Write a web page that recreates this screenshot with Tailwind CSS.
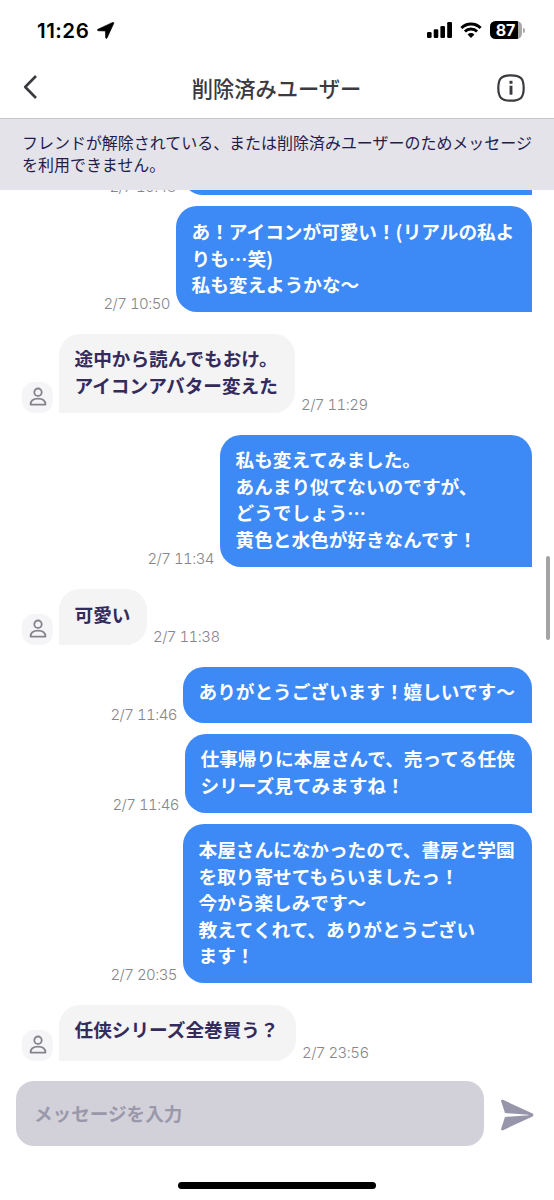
<!DOCTYPE html>
<html lang="ja">
<head>
<meta charset="utf-8">
<title>削除済みユーザー</title>
<script src="https://cdn.jsdelivr.net/npm/@tailwindcss/browser@4"></script>
</head>
<body class="bg-white">
<svg class="hidden">
  <symbol id="person" viewBox="0 0 18 20"><g fill="none" stroke="#84848c" stroke-width="1.8"><circle cx="9" cy="5.2" r="3.7"/><path d="M1.600 17.6C1.600 13.6 4.6 11.7 9 11.7s7.400 1.900 7.400 5.900Z" stroke-linejoin="round"/></g></symbol>
</svg>
<div class="relative flex h-[1200px] w-[554px] flex-col overflow-hidden bg-white font-['Liberation_Sans','Noto_Sans_CJK_JP',sans-serif]">
  <!-- Status bar -->
  <div class="flex h-[60px] shrink-0 items-center justify-between pl-[37px] pr-[29px] text-black">
    <div class="flex items-center gap-[6px]">
      <span class="w-[54px] pt-[1px] font-['Inter',sans-serif] text-[20.500px] leading-6 font-semibold tracking-[0.500px]">11:26</span>
      <svg class="h-[17px] w-[18px]" viewBox="0 0 18 17"><path d="M.9 7.300 15.600.4q1.700-.4 1.100 1.200L10.100 15.900q-1.100 1.400-1.500-.3L8.400 9 1.100 8.800Q-.5 8.200.9 7.300Z" stroke="#000" stroke-width=".6"/></svg>
    </div>
    <div class="flex items-center">
      <svg class="h-[16px] w-[26px]" viewBox="0 0 26 16"><rect x="0" y="10" width="4.600" height="6" rx="1.300"/><rect x="6.700" y="7.200" width="4.600" height="8.800" rx="1.300"/><rect x="13.400" y="4" width="4.600" height="12" rx="1.300"/><rect x="20.200" y="0" width="4.800" height="16" rx="1.300"/></svg>
      <svg class="ml-[7px] h-[16px] w-[22px]" viewBox="0 0 22 16"><g fill="none" stroke="#000" stroke-width="2.900"><path d="M1.400 6a13.500 13.500 0 0 1 19.200 0"/><path d="M4.900 9.600a8.600 8.600 0 0 1 12.200 0"/></g><path d="M11 15.900 7.600 12.500a4.800 4.800 0 0 1 6.800 0Z"/></svg>
      <div class="ml-[8px] flex h-[18px] w-[32px] items-center justify-center rounded-[5.500px] bg-[linear-gradient(90deg,#000_89%,#a8a8a8_89%)] pr-[1px] font-['Inter',sans-serif] text-[16px] leading-none font-bold text-white">87</div>
      <div class="ml-[1px] h-[5px] w-[2px] rounded-r-full bg-[#a8a8a8]"></div>
    </div>
  </div>
  <!-- Header -->
  <header class="flex h-[58px] shrink-0 items-center justify-between pr-[29px] pl-[22px] text-[#3a3a3f]">
    <svg class="mb-[5px] h-[26px] w-[28px]" viewBox="0 0 28 26" fill="none" stroke="currentColor" stroke-width="2.600"><path d="M14 2 3.200 13 14 24" stroke-linejoin="round"/></svg>
    <h1 class="mb-[2px] ml-[6px] font-['Noto_Sans_CJK_JP',sans-serif] text-[21.250px] leading-7 font-medium">削除済みユーザー</h1>
    <svg class="mb-[3px] h-[28px] w-[28px]" viewBox="0 0 28 28" fill="none" stroke="currentColor"><path d="M14 1.300c9.500 0 12.700 3.200 12.700 12.700S23.500 26.700 14 26.700 1.300 23.500 1.300 14 4.500 1.300 14 1.300Z" stroke-width="2.200"/><path d="M14 11.700v9" stroke-width="2.900"/><path d="M14 6.800v3" stroke-width="3"/></svg>
  </header>
  <!-- Notice -->
  <div class="h-[72px] shrink-0 border-t border-[#c8c8ca] bg-[#e4e3e9] pt-[12px] pl-[22px] font-['Noto_Sans_CJK_JP',sans-serif] text-[15.980px] leading-[22px] whitespace-nowrap text-[#231c4b]">フレンドが解除されている、または削除済みユーザーのためメッセージ<br>を利用できません。</div>
  <!-- Messages -->
  <main class="flex h-[871px] shrink-0 flex-col justify-end overflow-hidden pr-[22px] pl-[22px] font-['Noto_Sans_CJK_JP',sans-serif] text-[18.650px] leading-[26.500px] font-bold whitespace-nowrap">
    <div class="flex shrink-0 items-end justify-end gap-[6px]">
      <time class="font-['Inter',sans-serif] text-[15px] leading-4 font-light tracking-[-0.550px] tabular-nums text-[#86868b]">2/7 10:48</time>
      <div class="h-[56px] w-[350px] rounded-[21px] rounded-br-none bg-[#3d89f6]"></div>
    </div>
    <div class="mt-[11px] flex shrink-0 items-end justify-end gap-[6px]">
      <time class="font-['Inter',sans-serif] text-[15px] leading-4 font-light tracking-[-0.550px] tabular-nums text-[#86868b]">2/7 10:50</time>
      <div class="h-[106px] w-[356px] rounded-[21px] rounded-br-none bg-[#3d89f6] pt-[12px] pl-[15.500px] text-white">あ！アイコンが可愛い！(リアルの私よ<br>りも…笑)<br>私も変えようかな〜</div>
    </div>
    <div class="mt-[22px] flex shrink-0 items-end gap-[6px]">
      <div class="flex size-[31px] items-center justify-center rounded-[12px] bg-[#f5f5f8]"><svg class="mb-[2px] h-[20px] w-[18px]"><use href="#person"/></svg></div>
      <div class="h-[79px] w-[236px] rounded-[21px] rounded-bl-none bg-[#f4f4f5] pt-[11px] pl-[15.500px] text-[#332b5c]">途中から読んでもおけ。<br>アイコンアバター変えた</div>
      <time class="font-['Inter',sans-serif] text-[15px] leading-4 font-light tracking-[-0.550px] tabular-nums text-[#86868b]">2/7 11:29</time>
    </div>
    <div class="mt-[22px] flex shrink-0 items-end justify-end gap-[6px]">
      <time class="font-['Inter',sans-serif] text-[15px] leading-4 font-light tracking-[-0.550px] tabular-nums text-[#86868b]">2/7 11:34</time>
      <div class="h-[132px] w-[312px] rounded-[21px] rounded-br-none bg-[#3d89f6] pt-[11px] pl-[15.500px] text-white">私も変えてみました。<br>あんまり似てないのですが、<br>どうでしょう…<br>黄色と水色が好きなんです！</div>
    </div>
    <div class="mt-[22px] flex shrink-0 items-end gap-[6px]">
      <div class="flex size-[31px] items-center justify-center rounded-[12px] bg-[#f5f5f8]"><svg class="mb-[2px] h-[20px] w-[18px]"><use href="#person"/></svg></div>
      <div class="h-[56px] w-[88px] rounded-[21px] rounded-bl-none bg-[#f4f4f5] pt-[12px] pl-[15.500px] text-[#332b5c]">可愛い</div>
      <time class="font-['Inter',sans-serif] text-[15px] leading-4 font-light tracking-[-0.550px] tabular-nums text-[#86868b]">2/7 11:38</time>
    </div>
    <div class="mt-[22px] flex shrink-0 items-end justify-end gap-[6px]">
      <time class="font-['Inter',sans-serif] text-[15px] leading-4 font-light tracking-[-0.550px] tabular-nums text-[#86868b]">2/7 11:46</time>
      <div class="h-[56px] w-[349px] rounded-[21px] rounded-br-none bg-[#3d89f6] pt-[11px] pl-[15.500px] text-white">ありがとうございます！嬉しいです〜</div>
    </div>
    <div class="mt-[11px] flex shrink-0 items-end justify-end gap-[6px]">
      <time class="font-['Inter',sans-serif] text-[15px] leading-4 font-light tracking-[-0.550px] tabular-nums text-[#86868b]">2/7 11:46</time>
      <div class="h-[79px] w-[347px] rounded-[21px] rounded-br-none bg-[#3d89f6] pt-[11px] pl-[15.500px] text-white">仕事帰りに本屋さんで、売ってる任侠<br>シリーズ見てみますね！</div>
    </div>
    <div class="mt-[11px] flex shrink-0 items-end justify-end gap-[6px]">
      <time class="font-['Inter',sans-serif] text-[15px] leading-4 font-light tracking-[-0.550px] tabular-nums text-[#86868b]">2/7 20:35</time>
      <div class="h-[159px] w-[349px] rounded-[21px] rounded-br-none bg-[#3d89f6] pt-[12px] pl-[15.500px] text-white">本屋さんになかったので、書房と学園<br>を取り寄せてもらいましたっ！<br>今から楽しみです〜<br>教えてくれて、ありがとうござい<br>ます！</div>
    </div>
    <div class="mt-[22px] flex shrink-0 items-end gap-[6px]">
      <div class="flex size-[31px] items-center justify-center rounded-[12px] bg-[#f5f5f8]"><svg class="mb-[2px] h-[20px] w-[18px]"><use href="#person"/></svg></div>
      <div class="h-[56px] w-[237px] rounded-[21px] rounded-bl-none bg-[#f4f4f5] pt-[11px] pl-[15.500px] text-[#332b5c]">任侠シリーズ全巻買う？</div>
      <time class="font-['Inter',sans-serif] text-[15px] leading-4 font-light tracking-[-0.550px] tabular-nums text-[#86868b]">2/7 23:56</time>
    </div>
  </main>
  <!-- Composer -->
  <footer class="flex shrink-0 items-center gap-[16px] pt-[20px] pl-[16px]">
    <div class="flex h-[65px] w-[468px] items-center rounded-[18px] bg-[#d2d1d9] pb-[2px] pl-[18px] font-['Noto_Sans_CJK_JP',sans-serif] text-[18.600px] font-bold text-[#9a98aa]">メッセージを入力</div>
    <svg class="mt-[3px] h-[32px] w-[34px]" viewBox="0 0 34 32" fill="#9795aa"><path d="M3 .8 32.600 14.600q1.700 1.400 0 2.800L3 31.200Q.6 31.800 1.200 29.500L5 17.900 28.500 16.300V15.700L5 14.100 1.200 2.500Q.6.200 3 .8Z"/></svg>
  </footer>
  <div class="mt-auto mb-[11px] h-[7px] w-[198px] shrink-0 self-center rounded-full bg-black"></div>
  <!-- Scroll indicator overlay -->
  <div class="absolute top-[556px] left-[546px] h-[84px] w-[4px] rounded-full bg-[#a3a3a3]"></div>
</div>
</body>
</html>
